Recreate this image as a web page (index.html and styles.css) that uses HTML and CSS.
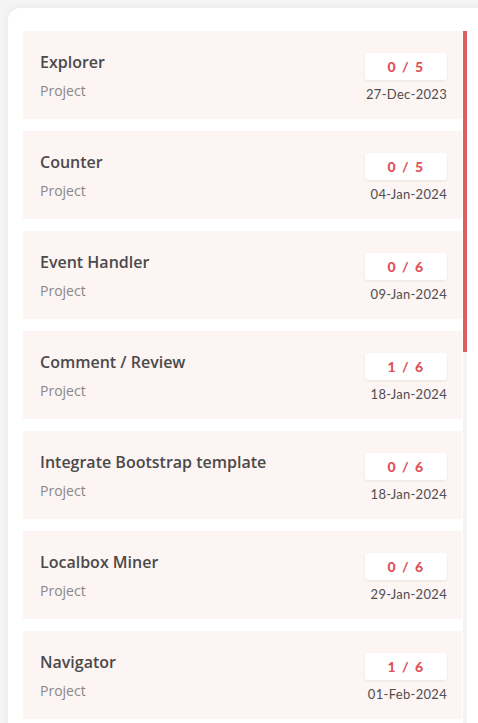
FILE: index.html
```html
<!DOCTYPE html>
<html>
<head>
<meta charset="utf-8">
<link rel="stylesheet" href="styles.css">
</head>
<body>
<div class="page">
  <div class="card">
    <div class="list">
      <div class="item">
        <div class="info"><div class="title">Explorer</div><div class="sub">Project</div></div>
        <div class="meta"><div class="badge">0 / 5</div><div class="date">27-Dec-2023</div></div>
      </div>
      <div class="item">
        <div class="info"><div class="title">Counter</div><div class="sub">Project</div></div>
        <div class="meta"><div class="badge">0 / 5</div><div class="date">04-Jan-2024</div></div>
      </div>
      <div class="item">
        <div class="info"><div class="title">Event Handler</div><div class="sub">Project</div></div>
        <div class="meta"><div class="badge">0 / 6</div><div class="date">09-Jan-2024</div></div>
      </div>
      <div class="item">
        <div class="info"><div class="title">Comment / Review</div><div class="sub">Project</div></div>
        <div class="meta"><div class="badge">1 / 6</div><div class="date">18-Jan-2024</div></div>
      </div>
      <div class="item">
        <div class="info"><div class="title">Integrate Bootstrap template</div><div class="sub">Project</div></div>
        <div class="meta"><div class="badge">0 / 6</div><div class="date">18-Jan-2024</div></div>
      </div>
      <div class="item">
        <div class="info"><div class="title">Localbox Miner</div><div class="sub">Project</div></div>
        <div class="meta"><div class="badge">0 / 6</div><div class="date">29-Jan-2024</div></div>
      </div>
      <div class="item">
        <div class="info"><div class="title">Navigator</div><div class="sub">Project</div></div>
        <div class="meta"><div class="badge">1 / 6</div><div class="date">01-Feb-2024</div></div>
      </div>
    </div>
    <div class="track"><div class="thumb"></div></div>
  </div>
</div>
</body>
</html>
```

FILE: styles.css
```css
html, body {
  margin: 0;
  padding: 0;
  height: 100%;
  overflow: hidden;
  background: #f4f4f4;
  font-family: Lato, "Open Sans", sans-serif;
}
.page {
  padding: 8px 0 0 8px;
}
.card {
  display: flex;
  align-items: flex-start;
  gap: 1px;
  margin-right: -20px;
  background: #ffffff;
  border-radius: 12px 12px 0 0;
  box-shadow: 0 0 8px rgba(0, 0, 0, 0.06);
  padding: 23px 0 0 15px;
  height: 760px;
}
.list {
  width: 439px;
  display: flex;
  flex-direction: column;
  gap: 12px;
}
.item {
  height: 88px;
  box-sizing: border-box;
  background: #fdf4f4;
  padding: 21px 15px 0 17px;
  display: flex;
  justify-content: space-between;
}
.info {
  display: flex;
  flex-direction: column;
  gap: 9px;
}
.title {
  font-family: "Open Sans", Lato, sans-serif;
  font-size: 16px;
  line-height: 20px;
  font-weight: 600;
  color: #4a4a4a;
}
.sub {
  font-family: "Open Sans", Lato, sans-serif;
  font-size: 14px;
  line-height: 20px;
  color: #888888;
}
.meta {
  display: flex;
  flex-direction: column;
  align-items: flex-end;
  padding-top: 1px;
}
.badge {
  width: 82px;
  height: 27px;
  box-sizing: border-box;
  background: #ffffff;
  border-radius: 3px;
  box-shadow: 0 1px 3px rgba(0, 0, 0, 0.08);
  display: flex;
  align-items: center;
  justify-content: center;
  font-size: 14px;
  font-weight: 900;
  letter-spacing: 1.5px;
  color: #e0525a;
}
.date {
  margin-top: 5px;
  font-size: 13px;
  line-height: 18px;
  color: #4e4e4e;
  letter-spacing: 0.3px;
}
.track {
  width: 4px;
  height: 700px;
  background: #f7f3f3;
}
.thumb {
  height: 321px;
  background: #dc5f61;
}
```
